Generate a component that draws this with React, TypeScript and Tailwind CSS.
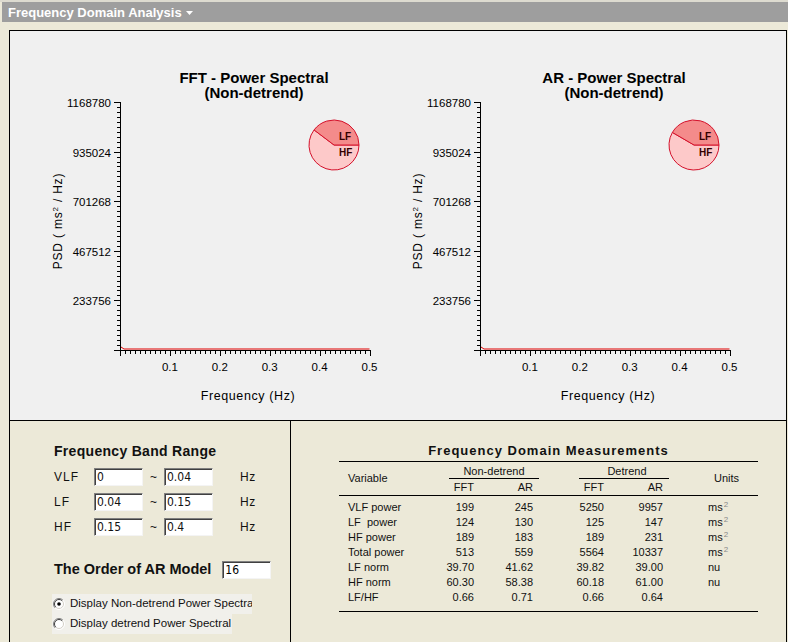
import React from 'react'

const SANS = "'Liberation Sans', Arial, sans-serif"

const yLabels = ['233756', '467512', '701268', '935024', '1168780']
const xLabels = ['0.1', '0.2', '0.3', '0.4', '0.5']

function Chart({ title, lf }: { title: string; lf: number }) {
  const x0 = 110
  const y0 = 319
  const xs = 4.99
  const ys = 4.96
  const cx = 324
  const cy = 114
  const r = 25
  const a = (lf / 100) * 2 * Math.PI
  const ex = cx + r * Math.cos(a)
  const ey = cy - r * Math.sin(a)

  return (
    <svg width={360} height={389} className="block shrink-0 overflow-visible" fontFamily={SANS}>
      <text x={244} y={51.5} textAnchor="middle" fontSize={15} fontWeight="bold" fill="#000">
        {title}
      </text>
      <text x={244} y={67} textAnchor="middle" fontSize={15} fontWeight="bold" fill="#000">
        (Non-detrend)
      </text>

      <g shapeRendering="crispEdges" stroke="#000">
        <line x1={x0 + 0.5} y1={71} x2={x0 + 0.5} y2={y0 + 0.5} />
        {Array.from({ length: 51 }, (_, i) => {
          const y = Math.round(y0 - i * ys) + 0.5
          const major = i % 10 === 0
          return <line key={'y' + i} x1={x0 - (major ? 6 : 3)} x2={x0 + 0.5} y1={y} y2={y} />
        })}
        <line x1={x0} y1={y0 + 0.5} x2={x0 + 250} y2={y0 + 0.5} />
        {Array.from({ length: 51 }, (_, i) => {
          const x = Math.round(x0 + i * xs) + 0.5
          const major = i % 10 === 0
          return <line key={'x' + i} x1={x} x2={x} y1={y0} y2={y0 + (major ? 6 : 4)} />
        })}
      </g>

      <polyline
        points={`${x0 + 1},${y0 - 3} ${x0 + 4},${y0 - 1} ${x0 + 249.5},${y0 - 1}`}
        fill="none"
        stroke="#e00000"
        strokeWidth={1}
      />

      {yLabels.map((v, i) => (
        <text key={v} x={101} y={Math.round(y0 - (i + 1) * 10 * ys) + 4.5} textAnchor="end" fontSize={11.5} fill="#000">
          {v}
        </text>
      ))}
      {xLabels.map((v, i) => (
        <text key={v} x={x0 + (i + 1) * 49.9} y={340} textAnchor="middle" fontSize={11.5} fill="#000">
          {v}
        </text>
      ))}

      <text x={238} y={369} textAnchor="middle" fontSize={12.5} letterSpacing={0.6} fill="#000">
        Frequency (Hz)
      </text>
      <text
        x={51.5}
        y={190}
        transform="rotate(-90 51.5 190)"
        textAnchor="middle"
        fontSize={12}
        letterSpacing={0.8}
        fill="#000"
      >
        PSD ( ms
        <tspan fontSize={8} dy={-4}>
          2
        </tspan>
        <tspan dy={4}> / Hz)</tspan>
      </text>

      <path d={`M${cx} ${cy} L${ex} ${ey} A${r} ${r} 0 1 0 ${cx + r} ${cy} Z`} fill="#fdc9c9" stroke="#d4102a" />
      <path d={`M${cx} ${cy} L${cx + r} ${cy} A${r} ${r} 0 0 0 ${ex} ${ey} Z`} fill="#f48b8b" stroke="#d4102a" />
      <text x={329} y={109} fontSize={10} fontWeight="bold" fill="#300">
        LF
      </text>
      <text x={329} y={124.5} fontSize={10} fontWeight="bold" fill="#300">
        HF
      </text>
    </svg>
  )
}

function Field({ value, w = 'w-[49px]' }: { value: string; w?: string }) {
  return (
    <div
      className={`${w} h-[18px] bg-white border border-t-[#808080] border-l-[#808080] border-r-[#f4f4f4] border-b-[#f4f4f4] shadow-[inset_1px_1px_0_#404040] pl-[2px] flex items-center text-[12px] leading-none font-['Liberation_Sans_Narrow','DejaVu_Sans_Condensed',Arial,sans-serif]`}
    >
      {value}
    </div>
  )
}

function BandRow({ label, from, to }: { label: string; from: string; to: string }) {
  return (
    <div className="h-[25px] flex items-center text-[12px] text-[#111]">
      <span className="w-[40px] tracking-[1px]">{label}</span>
      <Field value={from} />
      <span className="w-[21px] text-center">~</span>
      <Field value={to} />
      <span className="ml-[27px] tracking-[0.5px]">Hz</span>
    </div>
  )
}

function Radio({ label, checked, w }: { label: string; checked?: boolean; w: string }) {
  return (
    <div className={`${w} h-[20px] -ml-[2px] pl-[1px] bg-[#f1f0eb] flex items-center gap-[5px] overflow-hidden whitespace-nowrap text-[11.5px] text-[#111]`}>
      <svg width="12" height="12" className="shrink-0">
        <circle cx="6" cy="6" r="5.5" fill="#fff" />
        <path d="M2.1 9.9 A5.5 5.5 0 0 1 9.9 2.1" fill="none" stroke="#808080" />
        <path d="M9.9 2.1 A5.5 5.5 0 0 1 2.1 9.9" fill="none" stroke="#ffffff" />
        <path d="M2.8 9.2 A4.5 4.5 0 0 1 9.2 2.8" fill="none" stroke="#404040" />
        <path d="M9.2 2.8 A4.5 4.5 0 0 1 2.8 9.2" fill="none" stroke="#d4d0c8" />
        {checked && <circle cx="6" cy="6" r="1.8" fill="#000" />}
      </svg>
      <span>{label}</span>
    </div>
  )
}

const rows = [
  ['VLF power', '199', '245', '5250', '9957', 'ms'],
  ['LF  power', '124', '130', '125', '147', 'ms'],
  ['HF power', '189', '183', '189', '231', 'ms'],
  ['Total power', '513', '559', '5564', '10337', 'ms'],
  ['LF norm', '39.70', '41.62', '39.82', '39.00', 'nu'],
  ['HF norm', '60.30', '58.38', '60.18', '61.00', 'nu'],
  ['LF/HF', '0.66', '0.71', '0.66', '0.64', ''],
]

export default function App() {
  return (
    <div className="w-[788px] h-[642px] overflow-hidden bg-[#ece9d8] font-['Liberation_Sans',Arial,sans-serif] text-black">
      <div className="h-[2px] bg-[#dddbd0]" />
      <div className="ml-[2px] h-[20px] bg-[#9e9e9e] flex items-center pl-[6px] gap-[4px]">
        <span className="text-[13px] font-bold text-white leading-none">Frequency Domain Analysis</span>
        <svg width="7" height="4" className="mt-[1px]">
          <path d="M0 0H7L3.5 4Z" fill="#fff" />
        </svg>
      </div>

      <div className="mt-[8px] ml-[9px] w-[778px] h-[700px] border border-black">
        <div className="h-[390px] bg-[#f0f0f0] border-b border-black flex">
          <Chart title="FFT - Power Spectral" lf={39.7} />
          <Chart title="AR - Power Spectral" lf={41.62} />
        </div>

        <div className="flex">
          <div className="w-[281px] h-[260px] border-r border-black pl-[44px] pt-[22px]">
            <div className="text-[14px] leading-[16px] font-bold tracking-[0.3px] text-[#111]">Frequency Band Range</div>
            <div className="mt-[5px]">
              <BandRow label="VLF" from="0" to="0.04" />
              <BandRow label="LF" from="0.04" to="0.15" />
              <BandRow label="HF" from="0.15" to="0.4" />
            </div>
            <div className="mt-[21px] h-[20px] flex items-center">
              <span className="text-[14.5px] font-bold text-[#111]">The Order of AR Model</span>
              <div className="ml-[11px]">
                <Field value="16" />
              </div>
            </div>
            <div className="mt-[14px]">
              <Radio label="Display Non-detrend Power Spectral" checked w="w-[200px]" />
              <Radio label="Display detrend Power Spectral" w="w-[180px]" />
            </div>
          </div>

          <div className="flex-1 pl-[48px]">
            <div className="w-[419px] mt-[22px] text-[13px] leading-[16px] font-bold tracking-[1px] text-center text-[#111]">
              Frequency Domain Measurements
            </div>
            <div className="w-[419px] mt-[2px] border-t border-b border-black text-[11px] text-[#111] pb-[6px]">
              <div className="grid grid-cols-[75px_60px_59px_71px_59px_95px] grid-rows-[17px_16px] border-b border-black">
                <div className="col-start-1 row-start-1 row-span-2 flex items-center pl-[9px]">Variable</div>
                <div className="col-start-2 col-span-2 row-start-1 pt-[3px]">
                  <div className="ml-[35px] w-[90px] h-[14px] leading-[13px] border-b border-black text-center">Non-detrend</div>
                </div>
                <div className="col-start-4 col-span-2 row-start-1 pt-[3px]">
                  <div className="ml-[46px] w-[90px] h-[14px] leading-[13px] border-b border-black text-center pl-[6px]">Detrend</div>
                </div>
                <div className="col-start-6 row-start-1 row-span-2 flex items-center pl-[51px]">Units</div>
                <div className="col-start-2 row-start-2 text-right leading-[16px]">FFT</div>
                <div className="col-start-3 row-start-2 text-right leading-[16px]">AR</div>
                <div className="col-start-4 row-start-2 text-right leading-[16px]">FFT</div>
                <div className="col-start-5 row-start-2 text-right leading-[16px]">AR</div>
              </div>
              <div className="pt-[4px]">
                {rows.map((r) => (
                  <div key={r[0]} className="grid grid-cols-[75px_60px_59px_71px_59px_95px] h-[15px] leading-[15px]">
                    <div className="pl-[9px] whitespace-pre">{r[0]}</div>
                    <div className="text-right">{r[1]}</div>
                    <div className="text-right">{r[2]}</div>
                    <div className="text-right">{r[3]}</div>
                    <div className="text-right">{r[4]}</div>
                    <div className="pl-[45px]">
                      {r[5]}
                      {r[5] === 'ms' && <sup className="text-[8px] text-[#888] ml-[1px]">2</sup>}
                    </div>
                  </div>
                ))}
              </div>
            </div>
          </div>
        </div>
      </div>
    </div>
  )
}
